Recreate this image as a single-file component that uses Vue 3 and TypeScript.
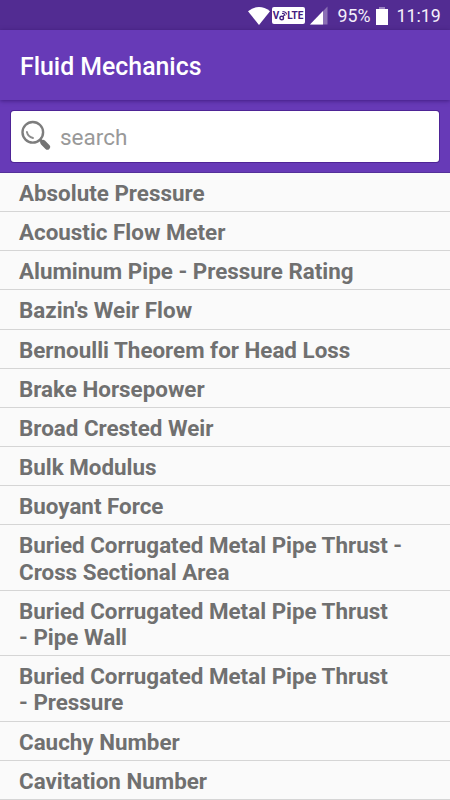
<script setup lang="ts">
import { ref } from 'vue'

const query = ref<string>('')

const topics: string[][] = [
  ['Absolute Pressure'],
  ['Acoustic Flow Meter'],
  ['Aluminum Pipe - Pressure Rating'],
  ["Bazin's Weir Flow"],
  ['Bernoulli Theorem for Head Loss'],
  ['Brake Horsepower'],
  ['Broad Crested Weir'],
  ['Bulk Modulus'],
  ['Buoyant Force'],
  ['Buried Corrugated Metal Pipe Thrust -', 'Cross Sectional Area'],
  ['Buried Corrugated Metal Pipe Thrust', '- Pipe Wall'],
  ['Buried Corrugated Metal Pipe Thrust', '- Pressure'],
  ['Cauchy Number'],
  ['Cavitation Number'],
]
</script>

<template>
  <main class="screen">
    <div class="status">
      <svg class="wifi" width="24" height="20" viewBox="0 0 24 20">
        <path d="M1 5.2Q12 -3.2 23 5.2L12 19Z" fill="#fff" />
      </svg>
      <div class="volte">
        <span>V</span>
        <svg width="8" height="12" viewBox="0 0 8 12" fill="none" stroke="#432080">
          <circle cx="2.7" cy="8" r="1.8" stroke-width="1.4" />
          <path d="M3.8 6.8L5.6 4.7M3 3.5Q5.6 3 6.2 5.6M3.5 1.5Q7.2 1.5 7.6 4.5" stroke-width="1.1" />
        </svg>
        <span>LTE</span>
      </div>
      <svg class="signal" width="18" height="19" viewBox="0 0 18 19">
        <path d="M0 18.5L17.5 0.5V18.5Z" fill="#8b70b4" />
        <path d="M0 18.5L13 5V18.5Z" fill="#fff" />
      </svg>
      <span class="percent">95%</span>
      <svg class="battery" width="12" height="18" viewBox="0 0 12 18">
        <path d="M3 0H9V2H3Z" fill="#9b83c1" />
        <path d="M0 2H12V18H0Z" fill="#fff" />
      </svg>
      <span class="clock">11:19</span>
    </div>
    <header class="toolbar"><h1>Fluid Mechanics</h1></header>
    <div class="search-area">
      <label class="search-box">
        <svg class="lens" width="32" height="32" viewBox="0 0 32 32" fill="none" stroke-linecap="round">
          <circle cx="11.8" cy="12.3" r="10.3" stroke="#7d7d7d" stroke-width="2.4" />
          <path d="M5.9 12Q7 16.8 12 18" stroke="#8c8c8c" stroke-width="1.9" />
          <path d="M19.5 20L22 22.5" stroke="#777" stroke-width="2.6" />
          <path d="M22 22.5L26.4 27" stroke="#737373" stroke-width="5.4" />
        </svg>
        <input v-model="query" type="text" placeholder="search" />
      </label>
    </div>
    <ul class="topics">
      <li v-for="(lines, i) in topics" :key="i">
        <span v-for="line in lines" :key="line">{{ line }}</span>
      </li>
    </ul>
  </main>
</template>

<style>
body {
  margin: 0;
  overflow: hidden;
}
</style>

<style scoped>
.screen {
  box-sizing: border-box;
  width: 450px;
  height: 800px;
  overflow: hidden;
  display: flex;
  flex-direction: column;
  background: #fafafa;
  font-family: Roboto, sans-serif;
}
.status {
  box-sizing: border-box;
  flex: none;
  height: 30px;
  padding: 1px 10px 0 0;
  display: flex;
  align-items: center;
  justify-content: flex-end;
  background: #522c92;
  color: #f4effa;
  font-size: 17.8px;
}
.wifi {
  margin-right: 1px;
}
.volte {
  box-sizing: border-box;
  width: 33px;
  height: 17px;
  margin-right: 5px;
  display: flex;
  align-items: center;
  justify-content: center;
  border-radius: 2px;
  background: #fff;
  color: #432080;
  font-size: 10px;
  font-weight: 700;
  line-height: 17px;
}
.signal {
  margin-right: 10px;
}
.percent {
  width: 33px;
  margin-right: 5px;
}
.battery {
  margin-right: 9px;
}
.clock {
  width: 43.5px;
  white-space: nowrap;
}
.toolbar {
  box-sizing: border-box;
  position: relative;
  flex: none;
  height: 70px;
  padding: 2px 20px 0;
  display: flex;
  align-items: center;
  background: #673ab7;
  box-shadow: 0 1px 4px rgba(30, 0, 80, 0.5);
}
.toolbar h1 {
  margin: 0;
  color: #fff;
  font-size: 24.85px;
  font-weight: 500;
}
.search-area {
  box-sizing: border-box;
  flex: none;
  height: 73px;
  padding: 11px 11px;
  background: #673ab7;
  border-bottom: 1px solid #54309a;
}
.search-box {
  box-sizing: border-box;
  height: 50.5px;
  display: flex;
  align-items: center;
  padding-left: 10px;
  border-radius: 3px;
  background: #fff;
  box-shadow: 0 0 0 1px #4e2496;
}
.lens {
  margin-bottom: 1px;
}
.search-box input {
  min-width: 0;
  flex: 1;
  margin: 1px 0 0 7px;
  padding: 0;
  border: 0;
  outline: 0;
  background: transparent;
  color: #555;
  font: 400 22.5px Roboto, sans-serif;
}
.search-box input::placeholder {
  color: #999;
  opacity: 1;
}
.topics {
  margin: 0;
  padding: 0;
  list-style: none;
}
.topics li {
  box-sizing: border-box;
  padding: 7px 19px 4.95px;
  border-bottom: 1px solid #d5d5d5;
  color: #707070;
  font-size: 22.38px;
  font-weight: 700;
  line-height: 26.22px;
}
.topics span {
  display: block;
  white-space: nowrap;
}
</style>
